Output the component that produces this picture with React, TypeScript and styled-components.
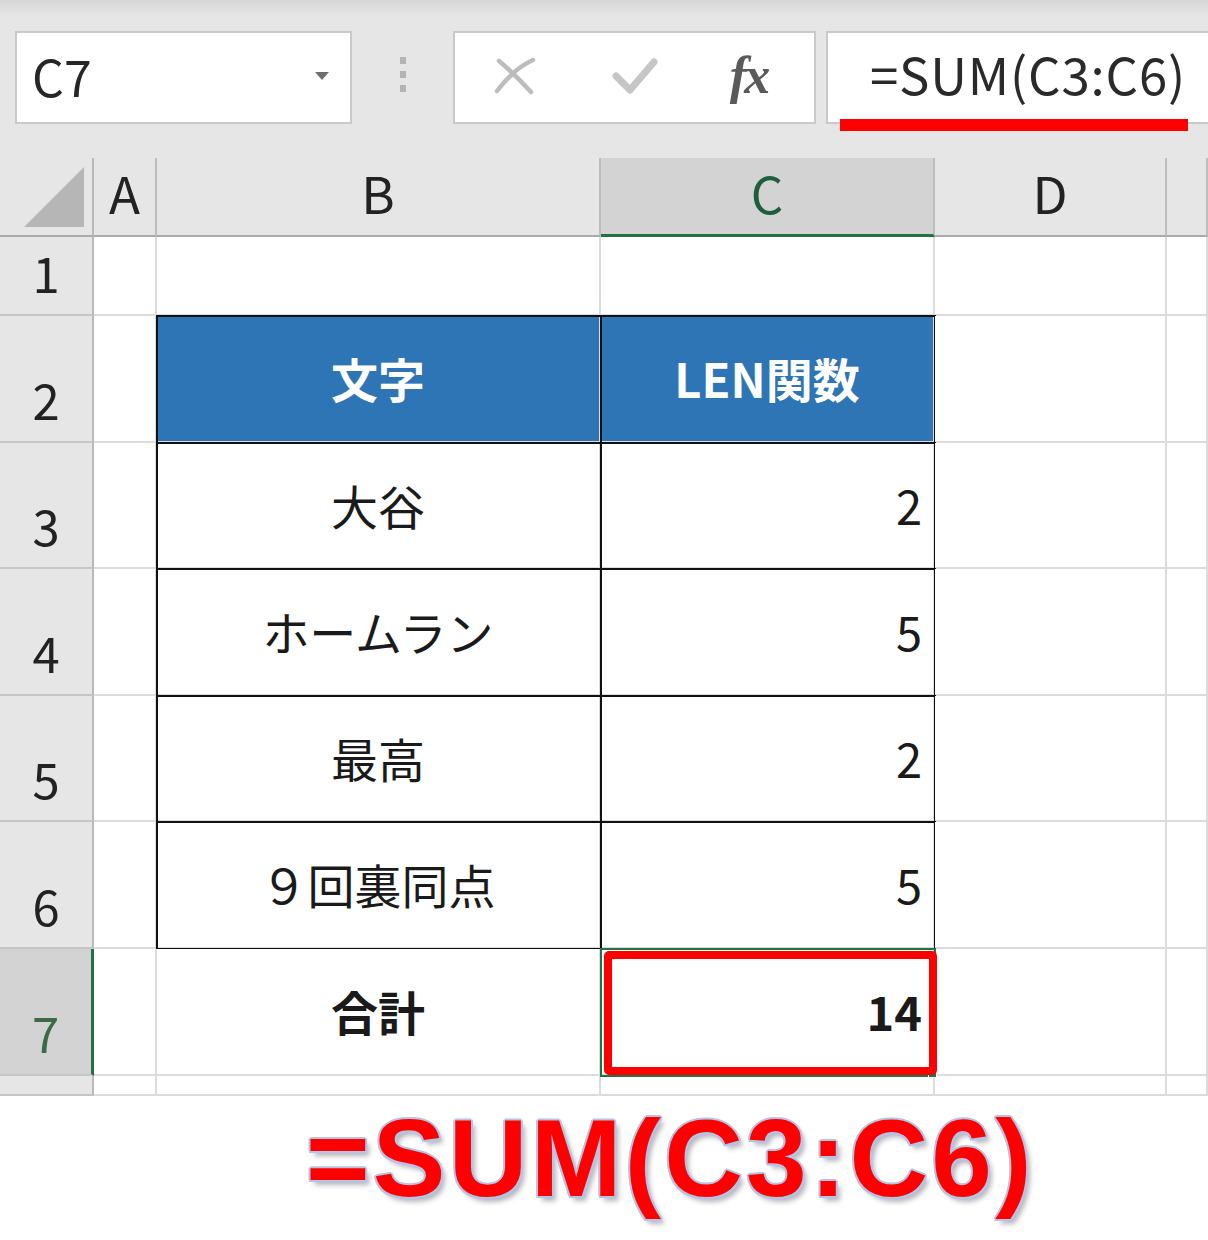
import React from 'react';
import styled, { createGlobalStyle } from 'styled-components';

const GlobalStyle = createGlobalStyle`
  html, body { margin: 0; padding: 0; background: #ffffff; }
  body { font-family: "Noto Sans CJK JP", "Noto Sans", sans-serif; }
`;

const Page = styled.div`
  width: 1208px;
  height: 1240px;
  overflow: hidden;
  background: #ffffff;
`;

const Toolbar = styled.div`
  height: 158px;
  box-sizing: border-box;
  padding: 31px 0 0 15px;
  display: flex;
  align-items: flex-start;
  background: linear-gradient(#d6d6d6 0px, #e6e6e6 16px, #e6e6e6 100%);
`;

const NameBox = styled.div`
  width: 337px;
  height: 93px;
  flex: none;
  box-sizing: border-box;
  background: #ffffff;
  border: 2px solid #c9c9c9;
  display: flex;
  align-items: center;
  justify-content: space-between;
  padding: 0 21px 6px 15px;
  font-size: 50px;
  line-height: 1;
  color: #262626;
`;

const DropArrow = styled.span`
  width: 0;
  height: 0;
  border-left: 7px solid transparent;
  border-right: 7px solid transparent;
  border-top: 8px solid #6e6e6e;
  margin-top: 2px;
`;

const Grip = styled.div`
  width: 101px;
  height: 93px;
  flex: none;
  display: flex;
  flex-direction: column;
  align-items: center;
  justify-content: center;
  gap: 7px;
  padding-bottom: 6px;
  box-sizing: border-box;
`;

const GripDot = styled.span`
  width: 6px;
  height: 7px;
  background: #b4b4b4;
`;

const ActionBox = styled.div`
  width: 363px;
  height: 93px;
  flex: none;
  box-sizing: border-box;
  background: #ffffff;
  border: 2px solid #c9c9c9;
  display: grid;
  grid-template-columns: 120px 120px 1fr;
  align-items: center;
  justify-items: center;
  padding: 0 0 4px 0;
`;

const Fx = styled.span`
  font-family: "Liberation Serif", "DejaVu Serif", serif;
  font-style: italic;
  font-weight: 700;
  font-size: 52px;
  color: #5a5a5a;
  line-height: 1;
  letter-spacing: -3px;
  margin-right: 12px;
`;

const FormulaBox = styled.div`
  position: relative;
  margin-left: 10px;
  width: 420px;
  height: 93px;
  flex: none;
  box-sizing: border-box;
  background: #ffffff;
  border: 2px solid #c9c9c9;
  display: flex;
  align-items: center;
  padding: 0 0 8px 42px;
  font-size: 51px;
  line-height: 1;
  letter-spacing: 0.8px;
  color: #2a2a2a;
`;

const RedUnderline = styled.span`
  position: absolute;
  left: 12px;
  top: 86px;
  width: 348px;
  height: 12px;
  background: #ff0000;
`;

const Sheet = styled.div`
  display: grid;
  grid-template-columns: 94px 63px 444px 334px 232px 41px;
  grid-template-rows: 79px 79px 127px 126px 127px 126px 127px 127px 20px;
  background: #ffffff;
`;

const Corner = styled.div`
  background: #e6e6e6;
  border-right: 2px solid #b9b9b9;
  border-bottom: 2px solid #ababab;
  box-sizing: border-box;
  display: flex;
  align-items: flex-end;
  justify-content: flex-end;
  padding: 0 8px 8px 0;
`;

const ColHead = styled.div<{ $active?: boolean }>`
  position: relative;
  background: ${(p) => (p.$active ? '#d3d3d3' : '#e6e6e6')};
  border-right: 2px solid #bdbdbd;
  border-bottom: ${(p) => (p.$active ? '3px solid #217346' : '2px solid #ababab')};
  box-sizing: border-box;
  display: flex;
  align-items: center;
  justify-content: center;
  font-size: 51px;
  line-height: 1;
  color: ${(p) => (p.$active ? '#1d5f3c' : '#222222')};
  padding-bottom: ${(p) => (p.$active ? '8px' : '9px')};
`;

const RowHead = styled.div<{ $active?: boolean }>`
  background: ${(p) => (p.$active ? '#d3d3d3' : '#e6e6e6')};
  border-right: ${(p) => (p.$active ? '3px solid #217346' : '2px solid #b9b9b9')};
  border-bottom: 2px solid #c6c6c6;
  box-sizing: border-box;
  display: flex;
  align-items: flex-end;
  justify-content: center;
  padding-bottom: 18px;
  font-size: 49px;
  line-height: 1;
  color: ${(p) => (p.$active ? '#3c6a46' : '#222222')};
`;

type CellKind = 'plain' | 'head' | 'body' | 'total' | 'selected';

const Cell = styled.div<{ $kind: CellKind; $align?: 'center' | 'right' }>`
  position: relative;
  z-index: ${(p) => (p.$kind === 'selected' ? 2 : 'auto')};
  box-sizing: border-box;
  border-right: 2px solid #dcdcdc;
  border-bottom: 2px solid #dcdcdc;
  display: flex;
  align-items: center;
  justify-content: ${(p) => (p.$align === 'right' ? 'flex-end' : 'center')};
  padding: ${(p) => (p.$align === 'right' ? '0 11px 2px 0' : '0 0 2px 0')};
  font-size: 47px;
  line-height: 1;
  color: #1a1a1a;
  background: ${(p) => (p.$kind === 'head' ? '#2e75b6' : '#ffffff')};
  font-weight: ${(p) => (p.$kind === 'head' || p.$kind === 'total' || p.$kind === 'selected' ? 700 : 400)};
  ${(p) => (p.$kind === 'head' ? 'color: #ffffff;' : '')}
  ${(p) =>
    p.$kind === 'head' || p.$kind === 'body'
      ? 'outline: 2px solid #111111; outline-offset: -1px;'
      : ''}
  ${(p) => (p.$kind === 'selected' ? 'outline: 2px solid #217346; outline-offset: -1px;' : '')}
`;

const FillHandle = styled.span`
  position: absolute;
  right: -4px;
  bottom: -4px;
  width: 7px;
  height: 7px;
  background: #217346;
  border: 1px solid #ffffff;
`;

const Highlight = styled.span`
  position: absolute;
  left: 3px;
  top: 2px;
  right: -4px;
  bottom: -1px;
  border: 8px solid #ff0000;
  border-radius: 5px;
  box-sizing: border-box;
`;

const Caption = styled.div`
  margin-top: 8px;
  padding-left: 306px;
  font-family: "Liberation Sans", Arial, sans-serif;
  font-weight: 700;
  font-size: 109px;
  line-height: 109px;
  letter-spacing: 3.2px;
  color: #ff0000;
  white-space: nowrap;
  text-shadow:
    2px 0 0 #b3c5e6, -2px 0 0 #b3c5e6, 0 2px 0 #b3c5e6, 0 -2px 0 #b3c5e6,
    1.5px 1.5px 0 #b3c5e6, -1.5px -1.5px 0 #b3c5e6, 1.5px -1.5px 0 #b3c5e6, -1.5px 1.5px 0 #b3c5e6,
    4px 5px 5px rgba(90, 90, 110, 0.45);
`;

const CancelIcon = () => (
  <svg width="44" height="40" viewBox="0 0 44 40">
    <path d="M4 35 C 14 22, 26 10, 40 4" stroke="#bdbdbd" strokeWidth="4.5" fill="none" strokeLinecap="round" />
    <path d="M6 5 C 18 15, 28 25, 38 36" stroke="#bdbdbd" strokeWidth="4.5" fill="none" strokeLinecap="round" />
  </svg>
);

const CheckIcon = () => (
  <svg width="46" height="40" viewBox="0 0 46 40">
    <path d="M4 20 L18 34 L42 6" stroke="#c6c6c6" strokeWidth="7" fill="none" strokeLinecap="round" strokeLinejoin="round" />
  </svg>
);

const CornerTriangle = () => (
  <svg width="60" height="60" viewBox="0 0 60 60">
    <polygon points="0,60 60,0 60,60" fill="#b6b6b6" />
  </svg>
);

type Row = {
  n: string;
  kind: CellKind | 'empty';
  b?: string;
  c?: string;
};

const rows: Row[] = [
  { n: '1', kind: 'empty' },
  { n: '2', kind: 'head', b: '文字', c: 'LEN関数' },
  { n: '3', kind: 'body', b: '大谷', c: '2' },
  { n: '4', kind: 'body', b: 'ホームラン', c: '5' },
  { n: '5', kind: 'body', b: '最高', c: '2' },
  { n: '6', kind: 'body', b: '９回裏同点', c: '5' },
  { n: '7', kind: 'total', b: '合計', c: '14' },
  { n: '', kind: 'empty' },
];

const columns = ['A', 'B', 'C', 'D', ''];

export default function App() {
  return (
    <Page>
      <GlobalStyle />
      <Toolbar>
        <NameBox>
          <span>C7</span>
          <DropArrow />
        </NameBox>
        <Grip>
          <GripDot />
          <GripDot />
          <GripDot />
        </Grip>
        <ActionBox>
          <CancelIcon />
          <CheckIcon />
          <Fx>fx</Fx>
        </ActionBox>
        <FormulaBox>
          =SUM(C3:C6)
          <RedUnderline />
        </FormulaBox>
      </Toolbar>
      <Sheet>
        <Corner>
          <CornerTriangle />
        </Corner>
        {columns.map((c, i) => (
          <ColHead key={i} $active={c === 'C'}>
            {c}
          </ColHead>
        ))}
        {rows.map((r, i) => {
          const active = r.n === '7';
          const bKind: CellKind = r.kind === 'empty' ? 'plain' : r.kind;
          const cKind: CellKind = r.kind === 'empty' ? 'plain' : r.kind === 'total' ? 'selected' : r.kind;
          return (
            <React.Fragment key={i}>
              <RowHead $active={active}>{r.n}</RowHead>
              <Cell $kind="plain" />
              <Cell $kind={bKind}>{r.b}</Cell>
              <Cell $kind={cKind} $align={r.kind === 'head' ? 'center' : 'right'}>
                {r.c}
                {cKind === 'selected' && (
                  <>
                    <FillHandle />
                    <Highlight />
                  </>
                )}
              </Cell>
              <Cell $kind="plain" />
              <Cell $kind="plain" />
            </React.Fragment>
          );
        })}
      </Sheet>
      <Caption>=SUM(C3:C6)</Caption>
    </Page>
  );
}
